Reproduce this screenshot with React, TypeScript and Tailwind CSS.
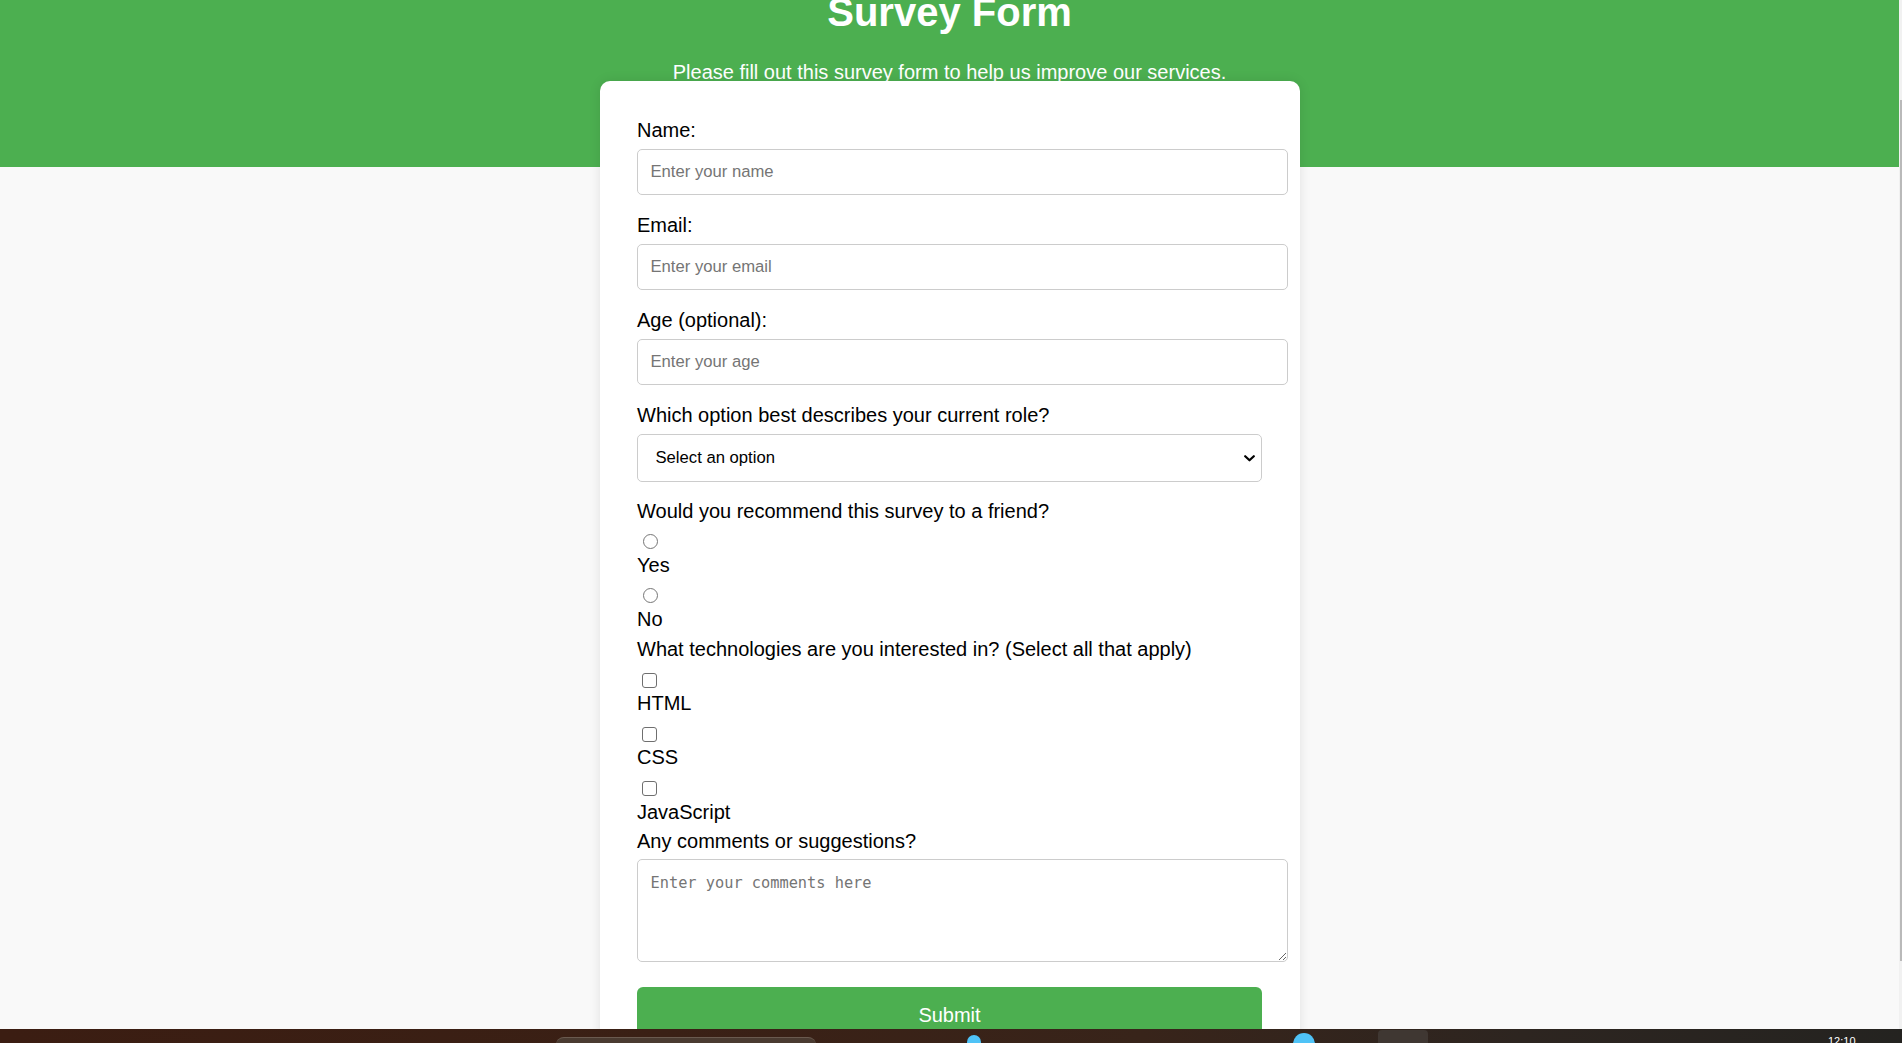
import React from "react";

const Label = ({ children, className = "" }: { children: React.ReactNode; className?: string }) => (
  <label className={"block h-[23px] text-[20px] leading-[23px] text-black " + className}>{children}</label>
);

const Radio = ({ name }: { name: string }) => (
  <div className="h-[24.6px] pl-[6px] pt-[4.4px]">
    <input
      type="radio"
      name={name}
      className="block h-[15px] w-[15px] appearance-none rounded-full border-[1.3px] border-[#767676] bg-white"
    />
  </div>
);

const Check = () => (
  <div className="h-[24.9px] pl-[4.5px] pt-[5.3px]">
    <input
      type="checkbox"
      className="block h-[15px] w-[15px] appearance-none rounded-[3px] border-[1.3px] border-[#6f6f6f] bg-white"
    />
  </div>
);

export default function App() {
  return (
    <div className="flex h-[1043px] w-full flex-col overflow-hidden bg-[#f9f9f9] [font-family:'Liberation_Sans',Arial,sans-serif]">
      <div className="flex min-h-0 flex-1">
        <main className="min-w-0 flex-1 overflow-hidden bg-[#f9f9f9]">
          <header className="flex h-[167px] flex-col items-center bg-[#4caf50] text-white">
            <h1 className="mt-[-11px] text-[40px] font-bold leading-[46px]">Survey Form</h1>
            <p className="mt-[26px] text-[20px] leading-[23px]">
              Please fill out this survey form to help us improve our services.
            </p>
          </header>
          <form
            className="relative mx-auto mt-[-86px] w-[700px] rounded-[10px] bg-white px-[37.5px] pb-[40px] pt-[38.3px] shadow-[0_0_12px_rgba(0,0,0,0.1)]"
            onSubmit={(e) => e.preventDefault()}
          >
            <Label className="mb-[7px]">Name:</Label>
            <input
              type="text"
              placeholder="Enter your name"
              className="mb-[19px] block h-[46px] w-[651px] rounded-[5px] border border-[#cccccc] bg-white px-[12.5px] text-[16.67px] text-black outline-none placeholder:text-[#757575]"
            />
            <Label className="mb-[7px]">Email:</Label>
            <input
              type="email"
              placeholder="Enter your email"
              className="mb-[19px] block h-[46px] w-[651px] rounded-[5px] border border-[#cccccc] bg-white px-[12.5px] text-[16.67px] text-black outline-none placeholder:text-[#757575]"
            />
            <Label className="mb-[7px]">Age (optional):</Label>
            <input
              type="number"
              placeholder="Enter your age"
              className="mb-[19px] block h-[46px] w-[651px] rounded-[5px] border border-[#cccccc] bg-white px-[12.5px] text-[16.67px] text-black outline-none placeholder:text-[#757575]"
            />
            <Label className="mb-[7px]">Which option best describes your current role?</Label>
            <div className="relative mb-[18.4px] w-[625px]">
              <select
                defaultValue=""
                className="block h-[47.4px] w-[625px] appearance-none rounded-[5px] border border-[#cccccc] bg-white pl-[17.5px] text-[16.67px] text-black outline-none"
              >
                <option value="">Select an option</option>
                <option value="student">Student</option>
                <option value="full-time">Full Time Job</option>
                <option value="learner">Full Time Learner</option>
                <option value="other">Other</option>
              </select>
              <svg
                className="pointer-events-none absolute right-[7.5px] top-[20.5px]"
                width="11"
                height="7"
                viewBox="0 0 11 7"
                fill="none"
              >
                <path d="M1.2 1.2 L5.5 5.3 L9.8 1.2" stroke="#000" strokeWidth="2.2" strokeLinecap="round" strokeLinejoin="round" />
              </svg>
            </div>

            <Label className="mb-[6.25px]">Would you recommend this survey to a friend?</Label>
            <Radio name="recommend" />
            <Label className="mb-[6.25px]">Yes</Label>
            <Radio name="recommend" />
            <Label className="mb-[7.4px]">No</Label>

            <Label className="mb-[6.25px]">What technologies are you interested in? (Select all that apply)</Label>
            <Check />
            <Label className="mb-[6.25px]">HTML</Label>
            <Check />
            <Label className="mb-[6.25px]">CSS</Label>
            <Check />
            <Label className="mb-[6.25px]">JavaScript</Label>

            <Label className="mb-[6.25px] mt-[1.6px]">Any comments or suggestions?</Label>
            <textarea
              placeholder="Enter your comments here"
              className="block h-[103px] w-[651px] rounded-[5px] border border-[#cccccc] bg-white px-[12.5px] pt-[13.8px] text-[15.3px] leading-[19px] text-black outline-none placeholder:text-[#757575] [font-family:'DejaVu_Sans_Mono','Liberation_Mono',monospace]"
            />
            <button
              type="submit"
              className="mt-[24.5px] flex h-[59px] w-[625px] items-start justify-center rounded-[6px] bg-[#4caf50] pt-[17.6px] text-[20px] leading-[23px] text-white"
            >
              Submit
            </button>
          </form>
        </main>
        <div className="w-[3px] bg-[#f1f1f1]">
          <div className="ml-[1px] mt-[100px] h-[861px] w-[2px] bg-[#b9b9b9]" />
        </div>
      </div>
      <div className="flex h-[14.5px] shrink-0 items-start bg-[linear-gradient(90deg,#3b1d12_0%,#3a2015_35%,#38241a_60%,#2d2520_80%,#242320_100%)]">
        <div className="ml-[556px] mt-[8px] h-[10px] w-[260px] rounded-t-[8px] border-t border-[#6a5a4f] bg-[#4a3b31]" />
        <div className="ml-[151px] mt-[6px] h-[14px] w-[14px] rounded-full bg-[#4fc3f7]" />
        <div className="ml-[312px] mt-[4px] h-[22px] w-[22px] rounded-full bg-[#4fc3f7]" />
        <div className="ml-[63px] mt-[1.5px] h-[20px] w-[50px] rounded-[4px] bg-[#3f3732]" />
        <div className="ml-[400px] mt-[6px] text-[11px] leading-[12px] text-white">12:10</div>
      </div>
    </div>
  );
}
